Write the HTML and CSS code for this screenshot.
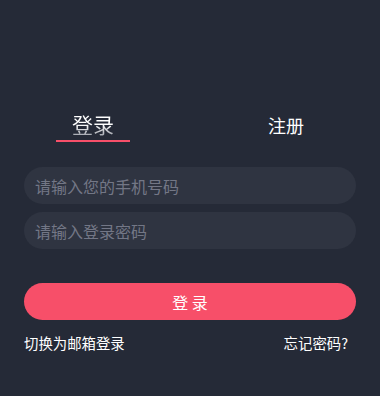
FILE: index.html
```html
<!DOCTYPE html>
<html>
  <head>
	<title>登录</title>
	<meta charset="UTF-8">
	<meta name="viewport" content="width=device-width, initial-scale=1.0">
	<link rel="stylesheet" href="styles.css">
  </head>
  <body>
	<div class="page">
		<div class="tabs">
			<div class="tab active"><span>登录</span></div>
			<div class="tab"><span>注册</span></div>
		</div>
		<form class="form" autocomplete="off">
			<input class="field" type="text" placeholder="请输入您的手机号码" />
			<input class="field" type="password" placeholder="请输入登录密码" />
			<button class="submit" type="button">登 录</button>
		</form>
		<div class="links">
			<a href="#">切换为邮箱登录</a>
			<a href="#">忘记密码?</a>
		</div>
	</div>
  </body>
</html>
```

FILE: styles.css
```css
html, body {
	margin: 0;
	padding: 0;
	height: 100%;
	background-color: #252a37;
	font-family: "Noto Sans CJK SC", "Noto Sans", sans-serif;
	color: #ffffff;
}

.page {
	padding: 108px 24px 0 24px;
}

.tabs {
	display: flex;
	height: 34px;
}

.tab {
	flex: 1;
	font-size: 18px;
	line-height: 34px;
}

.tab:first-child {
	padding-left: 32px;
}

.tab:last-child {
	text-align: right;
	padding-right: 52px;
}

.tab.active span {
	display: inline-block;
	padding: 0 16px;
	font-size: 21px;
	line-height: 31px;
	color: transparent;
	background: linear-gradient(#ffffff 50%, #80848f 100%);
	-webkit-background-clip: text;
	background-clip: text;
	border-bottom: 2px solid #f74f69;
}

.form {
	display: flex;
	flex-direction: column;
	margin-top: 25px;
}

.field {
	height: 37px;
	border: none;
	border-radius: 19px;
	background-color: #2f3441;
	padding: 0 11px;
	margin-bottom: 8px;
	font-family: inherit;
	font-size: 16px;
	color: #ffffff;
	box-sizing: border-box;
	outline: none;
}

.field::placeholder {
	color: #737786;
}

.submit {
	margin-top: 26px;
	height: 37px;
	border: none;
	border-radius: 19px;
	background-color: #f74f69;
	color: #ffffff;
	font-family: inherit;
	font-size: 16px;
}

.links {
	display: flex;
	justify-content: space-between;
	margin-top: 12px;
	padding-right: 8px;
	font-size: 14.4px;
}

.links a {
	color: #ffffff;
	text-decoration: none;
}
```
